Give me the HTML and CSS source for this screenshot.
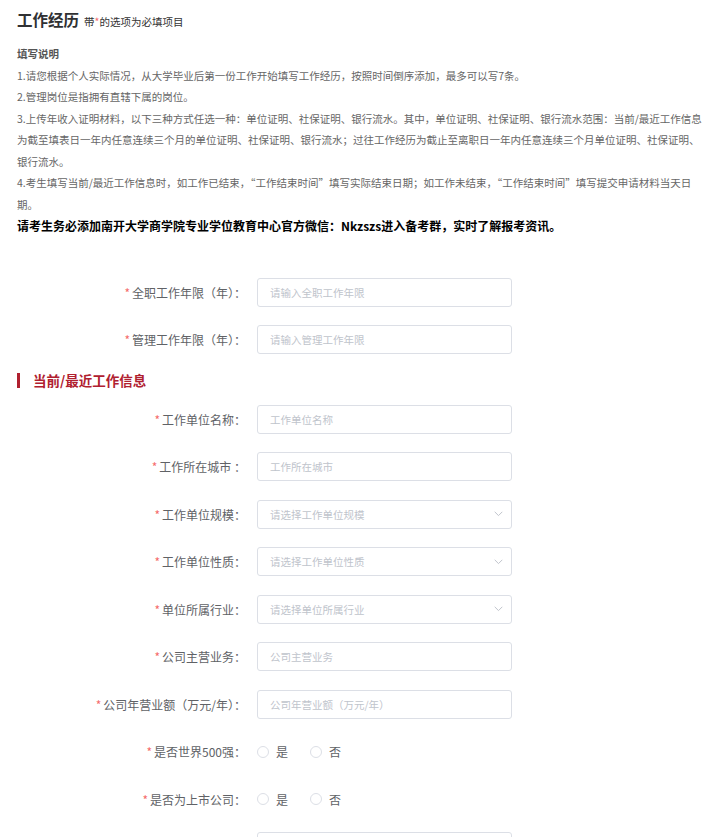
FILE: index.html
```html
<!DOCTYPE html>
<html lang="zh-CN">
<head>
<meta charset="utf-8">
<title>工作经历</title>
<link rel="stylesheet" href="styles.css">
</head>
<body>
<div class="page">
  <div class="head">
    <span class="title">工作经历</span>
    <span class="subtitle">带<i class="req">*</i>的选项为必填项目</span>
  </div>

  <div class="notes">
    <p class="notes-title">填写说明</p>
    <p>1.请您根据个人实际情况，从大学毕业后第一份工作开始填写工作经历，按照时间倒序添加，最多可以写7条。</p>
    <p>2.管理岗位是指拥有直辖下属的岗位。</p>
    <p>3.上传年收入证明材料，以下三种方式任选一种：单位证明、社保证明、银行流水。其中，单位证明、社保证明、银行流水范围：当前/最近工作信息为截至填表日一年内任意连续三个月的单位证明、社保证明、银行流水；过往工作经历为截止至离职日一年内任意连续三个月单位证明、社保证明、银行流水。</p>
    <p>4.考生填写当前/最近工作信息时，如工作已结束，“工作结束时间”填写实际结束日期；如工作未结束，“工作结束时间”填写提交申请材料当天日期。</p>
    <p class="notice">请考生务必添加南开大学商学院专业学位教育中心官方微信：Nkzszs进入备考群，实时了解报考资讯。</p>
  </div>

  <form class="form">
    <div class="row">
      <label class="label"><i class="req">*</i>全职工作年限（年）：</label>
      <input class="input" placeholder="请输入全职工作年限">
    </div>
    <div class="row">
      <label class="label"><i class="req">*</i>管理工作年限（年）：</label>
      <input class="input" placeholder="请输入管理工作年限">
    </div>

    <div class="section"><span class="bar"></span>当前/最近工作信息</div>

    <div class="row">
      <label class="label"><i class="req">*</i>工作单位名称：</label>
      <input class="input" placeholder="工作单位名称">
    </div>
    <div class="row">
      <label class="label"><i class="req">*</i>工作所在城市 ：</label>
      <input class="input" placeholder="工作所在城市">
    </div>
    <div class="row">
      <label class="label"><i class="req">*</i>工作单位规模：</label>
      <div class="input select"><span class="ph">请选择工作单位规模</span><svg class="arrow" width="9" height="6" viewBox="0 0 9 6"><path d="M0.7 0.8 L4.5 4.6 L8.3 0.8" fill="none" stroke="#c0c4cc" stroke-width="1"/></svg></div>
    </div>
    <div class="row">
      <label class="label"><i class="req">*</i>工作单位性质：</label>
      <div class="input select"><span class="ph">请选择工作单位性质</span><svg class="arrow" width="9" height="6" viewBox="0 0 9 6"><path d="M0.7 0.8 L4.5 4.6 L8.3 0.8" fill="none" stroke="#c0c4cc" stroke-width="1"/></svg></div>
    </div>
    <div class="row">
      <label class="label"><i class="req">*</i>单位所属行业：</label>
      <div class="input select"><span class="ph">请选择单位所属行业</span><svg class="arrow" width="9" height="6" viewBox="0 0 9 6"><path d="M0.7 0.8 L4.5 4.6 L8.3 0.8" fill="none" stroke="#c0c4cc" stroke-width="1"/></svg></div>
    </div>
    <div class="row">
      <label class="label"><i class="req">*</i>公司主营业务：</label>
      <input class="input" placeholder="公司主营业务">
    </div>
    <div class="row">
      <label class="label"><i class="req">*</i>公司年营业额（万元/年）：</label>
      <input class="input" placeholder="公司年营业额（万元/年）">
    </div>
    <div class="row">
      <label class="label"><i class="req">*</i>是否世界500强：</label>
      <div class="radios">
        <span class="radio"><span class="circle"></span>是</span>
        <span class="radio"><span class="circle"></span>否</span>
      </div>
    </div>
    <div class="row">
      <label class="label"><i class="req">*</i>是否为上市公司：</label>
      <div class="radios">
        <span class="radio"><span class="circle"></span>是</span>
        <span class="radio"><span class="circle"></span>否</span>
      </div>
    </div>
    <div class="row">
      <label class="label"></label>
      <input class="input">
    </div>
  </form>
</div>
</body>
</html>
```

FILE: styles.css
```css
* { box-sizing: border-box; }
html, body { margin: 0; padding: 0; background: #fff; }
body {
  font-family: "Noto Sans CJK SC", "Noto Sans", sans-serif;
  color: #606266;
}
.page {
  padding: 9px 10px 0 17px;
  width: 714px;
}
.req {
  font-style: normal;
  color: #f56c6c;
}
.head {
  display: flex;
  align-items: baseline;
  height: 20px;
  line-height: 20px;
}
.title {
  font-size: 15.5px;
  font-weight: bold;
  color: #303133;
}
.subtitle {
  margin-left: 5px;
  font-size: 10.5px;
  color: #333;
}
.notes {
  margin-top: 14px;
  font-size: 10.5px;
  line-height: 21.5px;
  color: #666;
}
.notes p { margin: 0; }
.notes-title {
  font-weight: bold;
  color: #555;
}
.notes .notice {
  font-size: 12px;
  font-weight: bold;
  color: #000;
}
.form {
  margin-top: 41px;
}
.row {
  display: flex;
  align-items: center;
  height: 29px;
  margin-bottom: 18.5px;
}
.label {
  flex: 0 0 240px;
  padding-right: 11px;
  text-align: right;
  font-size: 12px;
  color: #606266;
  white-space: nowrap;
}
.label .req { margin-right: 2px; }
.input {
  width: 255px;
  height: 29px;
  border: 1px solid #dcdfe6;
  border-radius: 3px;
  padding: 0 12px;
  font-family: inherit;
  font-size: 10.5px;
  color: #606266;
  outline: none;
  background: #fff;
}
.input::placeholder { color: #c0c4cc; }
.select {
  display: flex;
  align-items: center;
  justify-content: space-between;
  padding-right: 8px;
}
.ph { color: #c0c4cc; }
.arrow { display: block; }
.section {
  display: flex;
  align-items: center;
  height: 15px;
  margin-bottom: 17px;
  font-size: 13.5px;
  font-weight: bold;
  color: #b0202f;
}
.bar {
  width: 3px;
  height: 15px;
  background: #b0202f;
  margin-right: 13px;
}
.radios {
  display: flex;
  align-items: center;
}
.radio {
  display: flex;
  align-items: center;
  font-size: 12px;
  color: #606266;
  margin-right: 22px;
}
.circle {
  width: 12px;
  height: 12px;
  border: 1px solid #dcdfe6;
  border-radius: 50%;
  margin-right: 7px;
}
```
